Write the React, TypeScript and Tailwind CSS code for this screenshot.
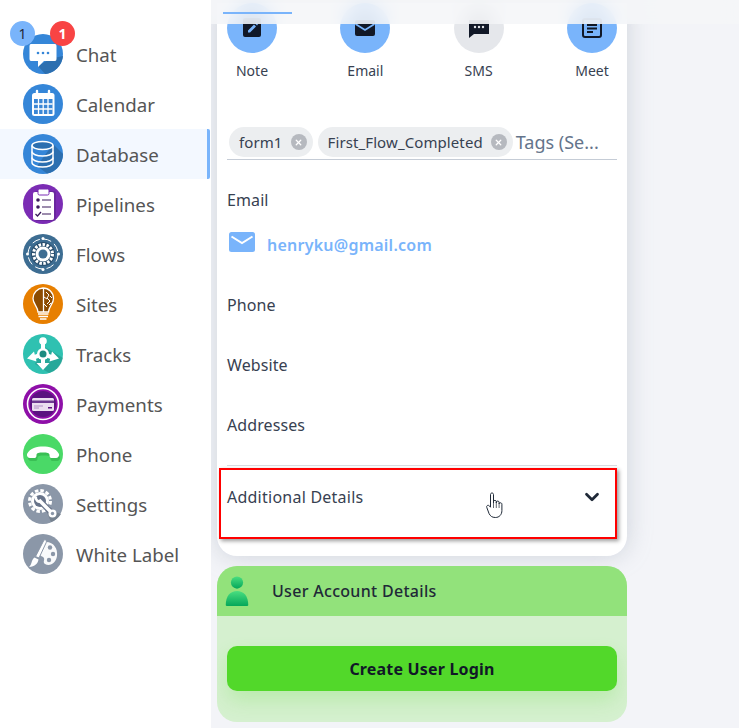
import { ReactNode } from "react";
import { ChevronDown, X } from "lucide-react";

const font = "font-['Noto_Sans','Open_Sans',sans-serif]";

function Badge({ className, children }: { className: string; children: ReactNode }) {
  return (
    <span className={`absolute top-[-13px] flex h-[25px] w-[25px] items-center justify-center rounded-full text-[14px] ${className}`}>
      {children}
    </span>
  );
}

const ChatIcon = (
  <svg viewBox="0 0 40 40" className="h-10 w-10">
    <circle cx="20" cy="20" r="20" fill="#3586d8" />
    <path d="M15 32 L27 25 L40 22 A20 20 0 0 1 22 40 Z" fill="#2c6fb0" />
    <path d="M8 11 Q6.500 11 6.500 13 V26 Q6.500 28 8 28 H15 V34 L21 28 H32 Q33.500 28 33.500 26 V13 Q33.500 11 32 11 Z" fill="#fff" transform="translate(0 -1)" />
    <circle cx="15" cy="19" r="1.300" fill="#3586d8" />
    <circle cx="20" cy="19" r="1.300" fill="#3586d8" />
    <circle cx="25" cy="19" r="1.300" fill="#3586d8" />
  </svg>
);

const CalendarIcon = (
  <svg viewBox="0 0 40 40" className="h-10 w-10">
    <circle cx="20" cy="20" r="20" fill="#3586d8" />
    <rect x="9" y="9" width="22.500" height="23" rx="2.500" fill="#fff" />
    <rect x="11" y="15" width="18.500" height="15" fill="#3b87d6" />
    <path d="M15.500 15v15M20.200 15v15M25 15v15M11 20h18.500M11 25h18.500" stroke="#fff" strokeWidth="1.300" />
    <path d="M14 7v5M26 7v5" stroke="#fff" strokeWidth="2.400" strokeLinecap="round" />
  </svg>
);

const DatabaseIcon = (
  <svg viewBox="0 0 40 40" className="h-10 w-10">
    <circle cx="20" cy="20" r="20" fill="#3586d8" />
    <path d="M30 10 L40 20 A20 20 0 0 1 24 39.600 L14 32 Z" fill="#2c6fb0" />
    <g fill="none" stroke="#fff" strokeWidth="1.500">
      <ellipse cx="19.500" cy="11.500" rx="10.500" ry="4" fill="#2c6fb0" />
      <path d="M9 11.500v17c0 2.500 4.700 4.500 10.500 4.500s10.500-2 10.500-4.500v-17" />
      <path d="M9 17.500c0 2.500 4.700 4.500 10.500 4.500s10.500-2 10.500-4.500M9 23.500c0 2.500 4.700 4.500 10.500 4.500s10.500-2 10.500-4.500" />
    </g>
  </svg>
);

const PipelinesIcon = (
  <svg viewBox="0 0 40 40" className="h-10 w-10">
    <circle cx="20" cy="20" r="20" fill="#7b2cb4" />
    <rect x="12" y="7" width="21" height="30" rx="2" fill="#5f2590" opacity="0.600" />
    <rect x="10" y="8" width="21" height="28" rx="2" fill="#fff" />
    <rect x="15" y="5" width="11" height="6" rx="1.500" fill="#fff" stroke="#7b2cb4" />
    <circle cx="15" cy="16" r="1.800" fill="#3a1a5c" />
    <circle cx="15" cy="23" r="1.800" fill="#3a1a5c" />
    <path d="M19 16h9M19 23h9M19 30h9" stroke="#3a1a5c" strokeWidth="1.200" />
    <path d="M12.500 30l2 2 3.500-4" stroke="#3a1a5c" strokeWidth="1.300" fill="none" />
  </svg>
);

const FlowsIcon = (
  <svg viewBox="0 0 40 40" className="h-10 w-10">
    <circle cx="20" cy="20" r="20" fill="#3d6d92" />
    <circle cx="20" cy="20" r="15" fill="none" stroke="#fff" strokeWidth="1" strokeDasharray="8 3.800" />
    <circle cx="20" cy="20" r="12" fill="#2a4f6e" />
    <circle cx="20" cy="20" r="9.500" fill="none" stroke="#fff" strokeWidth="3" strokeDasharray="2.500 1.500" />
    <circle cx="20" cy="20" r="7.500" fill="#fff" />
    <circle cx="20" cy="20" r="4.500" fill="#3d6d92" />
    <g fill="#fff">
      <circle cx="4.500" cy="20" r="1.500" />
      <circle cx="35.500" cy="20" r="1.500" />
      <circle cx="20" cy="4.500" r="1.500" />
      <circle cx="20" cy="35.500" r="1.500" />
    </g>
  </svg>
);

const SitesIcon = (
  <svg viewBox="0 0 40 40" className="h-10 w-10">
    <circle cx="20" cy="20" r="20" fill="#e77f00" />
    <path d="M20 4 A10.500 10.500 0 0 0 10 14.500 C10 20 14.500 22 15 28 H25.500 C26 22 30.500 20 30.500 14.500 A10.500 10.500 0 0 0 20 4 Z" fill="#8c4b00" stroke="#fff" strokeWidth="1.300" />
    <path d="M20.500 4v24" stroke="#fff" strokeWidth="1.300" />
    <path d="M23 8l3 3-2 3 3 3-3 3M21 13l3 2M21 20l3 3M27 12l2 2M26 21l2-2" stroke="#fff" strokeWidth="1" fill="none" />
    <path d="M15 30h10.500M15.500 32.500h9.500M17 35h6.500" stroke="#fff" strokeWidth="1.400" />
  </svg>
);

const TracksIcon = (
  <svg viewBox="0 0 40 40" className="h-10 w-10">
    <circle cx="20" cy="20" r="20" fill="#2fc1b1" />
    <path d="M20 12 L40 24 A20 20 0 0 1 26 39 L12 30 Z" fill="#1f8f84" opacity="0.500" />
    <path d="M20 8V32M20 20 9 24M20 20 31 24" stroke="#fff" strokeWidth="4" fill="none" />
    <path d="M4 24.500 11 17.500 13.500 27.500ZM36 24.500 29 17.500 26.500 27.500ZM13.500 29H26.500L20 36Z" fill="#fff" />
    <circle cx="20" cy="7" r="3.800" fill="#fff" />
    <circle cx="20" cy="20" r="6" fill="#fff" />
    <circle cx="20" cy="20" r="3.500" fill="#1d8b80" />
  </svg>
);

const PaymentsIcon = (
  <svg viewBox="0 0 40 40" className="h-10 w-10">
    <circle cx="20" cy="20" r="20" fill="#8e0fa8" />
    <circle cx="20" cy="20" r="15.500" fill="none" stroke="#fff" strokeWidth="1.600" />
    <circle cx="20" cy="20" r="13" fill="#5b1280" />
    <rect x="9" y="14" width="22" height="13" rx="1.500" fill="#ecdff0" />
    <rect x="9" y="16.500" width="22" height="2.500" fill="#6d3a90" />
    <path d="M11 22h9M11 24h5" stroke="#a57cba" strokeWidth="0.800" />
    <rect x="25" y="23" width="4" height="1.500" fill="#5b1280" />
  </svg>
);

const PhoneIcon = (
  <svg viewBox="0 0 40 40" className="h-10 w-10">
    <circle cx="20" cy="20" r="20" fill="#4ad967" />
    <path d="M4 21 C7 15 14 13.500 20 13.500 S33 15 36 21 C36.500 23 35 25 33 25 L28.500 25 C27 25 26.500 24 26.500 22 C26.500 20 24 19.500 20 19.500 S13.500 20 13.500 22 C13.500 24 13 25 11.500 25 L7 25 C5 25 3.500 23 4 21 Z" fill="#2aa644" opacity="0.500" transform="translate(1 2)" />
    <path d="M4 20 C7 14 14 12.500 20 12.500 S33 14 36 20 C36.500 22 35 24 33 24 L28.500 24 C27 24 26.500 23 26.500 21 C26.500 19 24 18.500 20 18.500 S13.500 19 13.500 21 C13.500 23 13 24 11.500 24 L7 24 C5 24 3.500 22 4 20 Z" fill="#fff" />
  </svg>
);

const SettingsIcon = (
  <svg viewBox="0 0 40 40" className="h-10 w-10">
    <circle cx="20" cy="20" r="20" fill="#8b97a8" />
    <path d="M22 24 L38 30 A20 20 0 0 1 28 38 Z" fill="#76828f" />
    <circle cx="17" cy="17" r="10.500" fill="none" stroke="#fff" strokeWidth="3" strokeDasharray="3.500 2" />
    <circle cx="17" cy="17" r="9" fill="#fff" />
    <circle cx="17" cy="17" r="6" fill="#68748a" />
    <path d="M14.500 14.500 29 29" stroke="#68748a" strokeWidth="6" />
    <path d="M16 16 29 29" stroke="#fff" strokeWidth="3.500" />
    <path d="M13 12.500a4 4 0 0 0 5 5" fill="none" stroke="#fff" strokeWidth="2.500" />
    <circle cx="29.500" cy="29.500" r="4" fill="#fff" />
    <circle cx="29.500" cy="29.500" r="1.700" fill="#8b97a8" />
  </svg>
);

const WhiteLabelIcon = (
  <svg viewBox="0 0 40 40" className="h-10 w-10">
    <circle cx="20" cy="20" r="20" fill="#8b97a8" />
    <path d="M23 8 C31 8 35 15 34 22 C33 29 27 33 22 30 C19 28 23 25 20 23 C18 22 16 21 17 17 C18 12 20 8 23 8 Z" fill="#fff" opacity="0.950" />
    <circle cx="27" cy="13.500" r="2.200" fill="#8b97a8" />
    <circle cx="30" cy="20" r="2.200" fill="#8b97a8" />
    <circle cx="26" cy="26" r="2.200" fill="#8b97a8" />
    <path d="M21 6 C23 5 24 7 23 9 L16 24 L12.500 22.500 Z" fill="#fff" stroke="#8b97a8" strokeWidth="1" />
    <path d="M11.500 23.500 L15.500 25.500 C15 29 12 33 6 33 C9 31 8 26 11.500 23.500 Z" fill="#fff" />
  </svg>
);

const navItems = [
  { label: "Chat", icon: ChatIcon },
  { label: "Calendar", icon: CalendarIcon },
  { label: "Database", icon: DatabaseIcon, active: true },
  { label: "Pipelines", icon: PipelinesIcon },
  { label: "Flows", icon: FlowsIcon },
  { label: "Sites", icon: SitesIcon },
  { label: "Tracks", icon: TracksIcon },
  { label: "Payments", icon: PaymentsIcon },
  { label: "Phone", icon: PhoneIcon },
  { label: "Settings", icon: SettingsIcon },
  { label: "White Label", icon: WhiteLabelIcon },
];

const actions = [
  {
    label: "Note",
    circle: "bg-[#79b4fb]",
    icon: (
      <svg viewBox="0 0 24 24" className="h-6 w-6" fill="#111827">
        <path d="M5 2h14a2 2 0 0 1 2 2v15a2 2 0 0 1-2 2H5a2 2 0 0 1-2-2V4a2 2 0 0 1 2-2Z" />
        <path d="M8 16.500v-2l6-6 2 2-6 6ZM15 7.500l1-1 2 2-1 1Z" fill="#79b4fb" />
      </svg>
    ),
  },
  {
    label: "Email",
    circle: "bg-[#79b4fb]",
    icon: (
      <svg viewBox="0 0 24 24" className="h-6 w-6" fill="#111827">
        <path d="M4 4h16a2 2 0 0 1 2 2v12a2 2 0 0 1-2 2H4a2 2 0 0 1-2-2V6a2 2 0 0 1 2-2Z" />
        <path d="M2.500 8 12 14l9.500-6" fill="none" stroke="#79b4fb" strokeWidth="1.800" />
      </svg>
    ),
  },
  {
    label: "SMS",
    circle: "bg-[#e5e7eb]",
    icon: (
      <svg viewBox="0 0 24 24" className="h-6 w-6" fill="#111827">
        <path d="M2 4h20v14H7l-5 4Z" />
        <circle cx="8" cy="11" r="1.200" fill="#e5e7eb" />
        <circle cx="12" cy="11" r="1.200" fill="#e5e7eb" />
        <circle cx="16" cy="11" r="1.200" fill="#e5e7eb" />
      </svg>
    ),
  },
  {
    label: "Meet",
    circle: "bg-[#79b4fb]",
    icon: (
      <svg viewBox="0 0 24 24" className="h-6 w-6" fill="none" stroke="#111827" strokeWidth="2">
        <rect x="3" y="3" width="18" height="18" rx="2" />
        <path d="M7 9h10M7 12.500h10M7 16h6" />
      </svg>
    ),
  },
];

function Tag({ label }: { label: string }) {
  return (
    <span className="flex h-[30px] items-center gap-[8px] rounded-full bg-[#eceef0] pl-[10px] pr-[6px] text-[15px] tracking-[0.1px] text-[#374151]">
      {label}
      <span className="flex h-4 w-4 items-center justify-center rounded-full bg-[#b6b9bf]">
        <X className="h-[9px] w-[9px] text-white" strokeWidth={3.500} />
      </span>
    </span>
  );
}

function Field({ label, className }: { label: string; className: string }) {
  return <div className={`text-[16px] leading-[24px] tracking-[0.1px] text-[#374151] ${className}`}>{label}</div>;
}

export default function App() {
  return (
    <div className={`flex h-[728px] w-[739px] overflow-hidden bg-[#f3f4f8] ${font}`}>
      <aside className="z-20 h-full w-[211px] shrink-0 bg-white pt-[29px]">
        {navItems.map((item) => (
          <div
            key={item.label}
            className={`flex h-[50px] items-center gap-[13px] pl-[23px] ${
              item.active ? "mr-px rounded-r-[2px] border-r-[3px] border-[#79b4fb] bg-[#f3f8ff]" : ""
            }`}
          >
            <span className="relative h-10 w-10 shrink-0">
              {item.icon}
              {item.label === "Chat" && (
                <>
                  <Badge className="left-[-13px] bg-[#79b4fb] text-[#1f2937]">1</Badge>
                  <Badge className="left-[27px] bg-[#f84444] font-bold text-white">1</Badge>
                </>
              )}
            </span>
            <span className="pt-[2px] text-[18.7px] leading-[26px] text-[#555555]">{item.label}</span>
          </div>
        ))}
      </aside>

      <main className="relative flex-1 overflow-hidden pl-[6px]">
        <div className="absolute left-0 top-0 z-10 h-[24px] w-full bg-[#f4f6f8]/85 backdrop-blur-sm">
          <div className="ml-[12px] mt-[12px] h-[2px] w-[69px] bg-[#79b4fb]" />
        </div>

        <section className="mt-[3px] w-[410px] rounded-b-[20px] bg-white px-[10px] pb-[9px] shadow-[0_0_24px_rgba(150,160,175,0.4)]">
          <div className="flex justify-between">
            {actions.map((action) => (
              <div key={action.label} className="flex w-[50px] flex-col items-center">
                <span className={`flex h-[50px] w-[50px] items-center justify-center rounded-full ${action.circle}`}>
                  {action.icon}
                </span>
                <span className="mt-[8px] whitespace-nowrap text-[14px] leading-[20px] text-[#374151]">{action.label}</span>
              </div>
            ))}
          </div>

          <div className="mt-[46px] flex h-[33px] items-center gap-[5px] border-b border-[#c5ccd6] pb-[2px] pl-[2px]">
            <Tag label="form1" />
            <Tag label="First_Flow_Completed" />
            <span className="ml-[-2px] whitespace-nowrap text-[18px] text-[#64748b]">Tags (Se...</span>
          </div>

          <Field label="Email" className="mt-[28px]" />
          <div className="mt-[21px] flex items-start gap-[12px] pl-[2px]">
            <svg viewBox="0 0 26 20" className="mt-[-1px] h-[20px] w-[26px]">
              <rect width="26" height="20" rx="2.500" fill="#79b4fb" />
              <path d="M2.500 4.500 13 11 23.500 4.500" fill="none" stroke="#fff" strokeWidth="2" />
            </svg>
            <span className="text-[16px] font-semibold leading-[24px] tracking-[0.24px] text-[#79b4fb]">henryku@gmail.com</span>
          </div>
          <Field label="Phone" className="mt-[36px]" />
          <Field label="Website" className="mt-[36px]" />
          <Field label="Addresses" className="mt-[36px]" />

          <div className="mt-[28px] border-t border-[#d9dce1] pt-[19px]">
            <div className="flex h-[24px] items-center justify-between pr-[14px] text-[16px] tracking-[0.24px] text-[#374151]">
              Additional Details
              <ChevronDown className="h-[22px] w-[22px] text-[#1f2937]" strokeWidth={3} />
            </div>
          </div>
          <div className="h-[38px]" />
        </section>

        <section className="mt-[10px] w-[410px] overflow-hidden rounded-[20px] bg-[#d5f0cf]">
          <div className="flex h-[50px] items-center bg-[#92e27b]">
            <svg viewBox="0 0 24 32" className="ml-[8px] h-[30px] w-[24px]">
              <defs>
                <linearGradient id="person" x1="0" y1="0" x2="0" y2="1">
                  <stop offset="0" stopColor="#4ade80" />
                  <stop offset="1" stopColor="#04a75a" />
                </linearGradient>
              </defs>
              <circle cx="12" cy="7" r="6.500" fill="url(#person)" />
              <path d="M0 31c0-10 5-15 12-15s12 5 12 15c0 .500-.500 1-1 1H1c-.500 0-1-.500-1-1Z" fill="url(#person)" />
            </svg>
            <span className="ml-[23px] text-[16px] font-medium tracking-[0.3px] text-[#1f2937]">User Account Details</span>
          </div>
          <div className="px-[10px] pb-[31px] pt-[30px]">
            <button className="h-[45px] w-full rounded-[10px] bg-[#52d82a] text-[16px] font-bold tracking-[0.18px] text-[#111827] shadow-[0_10px_20px_rgba(82,216,42,0.2)]">
              Create User Login
            </button>
          </div>
        </section>

        <div className="absolute left-[8px] top-[468px] h-[71px] w-[398px] border-[2px] border-[#ff0000] shadow-[2px_2px_4px_rgba(0,0,0,0.4)]" />
        <svg viewBox="0 0 18 26" className="absolute left-[275px] top-[492px] h-[26px] w-[18px]">
          <path
            d="M4.500 2.500c0-2 3-2 3 0v8.500-1.500c0-1.500 2.800-1.500 2.800 0v1.500-.800c0-1.500 2.800-1.500 2.800 0v1.500c0-1.300 2.800-1.300 2.800.500v6.300c0 4-2.500 7-6.500 7-3.500 0-5-1.500-6.300-3.800L.8 15.500c-.800-1.800 1.500-3 2.700-1.500l1 1.200Z"
            fill="#fff"
            stroke="#1f2937"
            strokeWidth="1"
          />
          <path d="M7.500 11v5M10.300 11v5M13.100 11v5" stroke="#1f2937" strokeWidth="0.700" />
        </svg>
      </main>
    </div>
  );
}
